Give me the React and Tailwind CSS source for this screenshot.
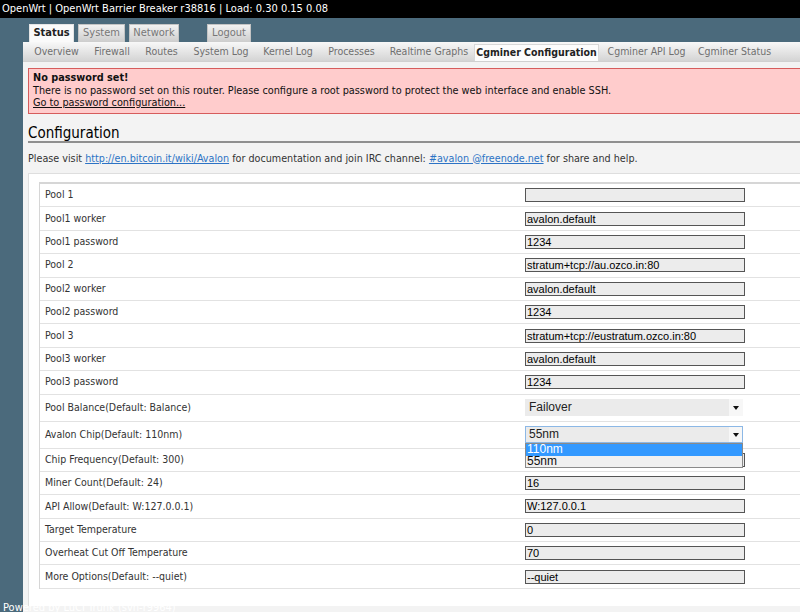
import React from "react";

const mainTabs = [
  { label: "Status", w: "w-[45px]", active: true },
  { label: "System", w: "w-[47px]" },
  { label: "Network", w: "w-[50px]" },
];

const subTabs = [
  { label: "Overview", w: "w-[59px]" },
  { label: "Firewall", w: "w-[52px]" },
  { label: "Routes", w: "w-[47px]" },
  { label: "System Log", w: "w-[72px]" },
  { label: "Kernel Log", w: "w-[62px]" },
  { label: "Processes", w: "w-[65px]" },
  { label: "Realtime Graphs", w: "w-[90px]" },
  { label: "Cgminer Configuration", w: "w-[125px]", active: true },
  { label: "Cgminer API Log", w: "w-[95px]" },
  { label: "Cgminer Status", w: "w-[81px]" },
];

const rowsA = [
  ["Pool 1", ""],
  ["Pool1 worker", "avalon.default"],
  ["Pool1 password", "1234"],
  ["Pool 2", "stratum+tcp://au.ozco.in:80"],
  ["Pool2 worker", "avalon.default"],
  ["Pool2 password", "1234"],
  ["Pool 3", "stratum+tcp://eustratum.ozco.in:80"],
  ["Pool3 worker", "avalon.default"],
  ["Pool3 password", "1234"],
];

const rowsB = [
  ["Chip Frequency(Default: 300)", ""],
  ["Miner Count(Default: 24)", "16"],
  ["API Allow(Default: W:127.0.0.1)", "W:127.0.0.1"],
  ["Target Temperature", "0"],
  ["Overheat Cut Off Temperature", "70"],
  ["More Options(Default: --quiet)", "--quiet"],
];

function Arrow() {
  return (
    <svg width="6" height="4" viewBox="0 0 6 4">
      <path d="M0 0 L6 0 L3 4 Z" fill="#111" />
    </svg>
  );
}

function TextBox({ value }) {
  return (
    <div className="w-[220px] h-[14px] border border-[#555] bg-[#ececec] font-['Liberation_Sans',Arial,sans-serif] text-[11px] leading-[12px] text-black pl-[1px] whitespace-nowrap overflow-hidden">
      {value}
    </div>
  );
}

function Row({ label, children, tall }) {
  return (
    <div
      className={
        "flex items-center border-b border-[#e2e2e2] " +
        (tall ? "h-[27px]" : "h-[23.4px]")
      }
    >
      <div className="w-[485px] pl-[5px] text-[#333]">{label}</div>
      {children}
    </div>
  );
}

export default function App() {
  return (
    <div className="relative w-[800px] h-[612px] overflow-hidden bg-[#4b6a7c] font-['DejaVu_Sans_Condensed','DejaVu_Sans',sans-serif] text-[10.5px] text-[#222]">
      <div className="h-[18px] bg-black text-white text-[11px] leading-[18px] pl-[2px] whitespace-nowrap">
        OpenWrt | OpenWrt Barrier Breaker r38816 | Load: 0.30 0.15 0.08
      </div>

      <div className="flex items-end h-[24px] pl-[29px] gap-[4px] text-[11px]">
        {mainTabs.map((t) => (
          <div
            key={t.label}
            className={
              t.w +
              " h-[18px] flex items-center justify-center border border-b-0 " +
              (t.active
                ? "bg-[#fafafa] border-[#e5e5e5] font-bold text-[#222]"
                : "bg-gradient-to-b from-[#f2f2f2] to-[#cdcdcd] border-[#c4c4c4] text-[#777]")
            }
          >
            {t.label}
          </div>
        ))}
        <div className="ml-[24px] w-[44px] h-[18px] flex items-center justify-center border border-b-0 bg-gradient-to-b from-[#f2f2f2] to-[#cdcdcd] border-[#c4c4c4] text-[#777]">
          Logout
        </div>
      </div>

      <div className="ml-[23px] w-[800px] h-[570px] bg-[#f3f3f3]">
        <div className="flex h-[20px] pl-[4px] bg-gradient-to-b from-[#f8f8f8] to-[#d4d4d4] border-b border-[#d0d0d0]">
          {subTabs.map((t) => (
            <div
              key={t.label}
              className={
                t.w +
                " flex items-center justify-center whitespace-nowrap " +
                (t.active
                  ? "mt-[2px] bg-[#fcfcfc] border border-b-0 border-[#d8d8d8] font-bold text-[#222]"
                  : "text-[#6f6f6f]")
              }
            >
              {t.label}
            </div>
          ))}
        </div>

        <div className="mt-[6px] ml-[5px] w-[790px] border border-[#d65c5c] bg-[#ffcccc] px-[4px] pt-[3px] pb-[3px] text-[10.8px] leading-[12.5px] text-[#111]">
          <div className="font-bold">No password set!</div>
          <div>
            There is no password set on this router. Please configure a root
            password to protect the web interface and enable SSH.
          </div>
          <div className="underline">Go to password configuration...</div>
        </div>

        <h2 className="mt-[11px] ml-[5px] w-[790px] text-[15px] leading-[16px] font-normal text-black border-b-2 border-[#8f8f8f]">
          Configuration
        </h2>

        <p className="mt-[9px] ml-[5px] text-[10.7px] leading-[13px] text-[#333] whitespace-nowrap">
          Please visit{" "}
          <span className="text-[#2d73c5] underline">
            http://en.bitcoin.it/wiki/Avalon
          </span>{" "}
          for documentation and join IRC channel:{" "}
          <span className="text-[#2d73c5] underline">#avalon @freenode.net</span>{" "}
          for share and help.
        </p>

        <div className="mt-[8.5px] ml-[5px] w-[790px] border-t border-l border-[#dedede] bg-white pt-[8px] pl-[10px] pb-[17px]">
          <div className="w-[780px] border-t-2 border-l border-[#d6d6d6]">
            {rowsA.map(([l, v]) => (
              <Row key={l} label={l}>
                <TextBox value={v} />
              </Row>
            ))}
            <Row label="Pool Balance(Default: Balance)" tall>
              <div className="w-[218px] h-[17px] flex bg-[#ebebeb] font-['Liberation_Sans',Arial,sans-serif] text-[12px] text-[#222]">
                <div className="flex-1 pl-[4px] leading-[17px]">Failover</div>
                <div className="w-[14px] bg-[#f7f7f7] flex items-center justify-center">
                  <Arrow />
                </div>
              </div>
            </Row>
            <Row label="Avalon Chip(Default: 110nm)" tall>
              <div className="relative w-[218px] h-[17px] flex border border-[#8cb8e6] bg-[#ebebeb] font-['Liberation_Sans',Arial,sans-serif] text-[12px] text-[#222]">
                <div className="flex-1 pl-[3px] leading-[15px]">55nm</div>
                <div className="w-[13px] bg-[#f7f7f7] flex items-center justify-center">
                  <Arrow />
                </div>
                <div className="absolute left-[-1px] top-[16px] z-10 w-[218px] border border-[#8a8a8a] bg-[#f0f0f0] text-[12px] leading-[11.5px]">
                  <div className="bg-[#3399ff] text-white pl-[1px]">110nm</div>
                  <div className="text-[#111] pl-[1px]">55nm</div>
                </div>
              </div>
            </Row>
            {rowsB.map(([l, v]) => (
              <Row key={l} label={l}>
                <TextBox value={v} />
              </Row>
            ))}
          </div>
        </div>
      </div>

      <div className="absolute left-[3px] bottom-[-4px] text-[11px] text-white whitespace-nowrap">
        Powered by LuCI Trunk (svn-r9964)
      </div>
    </div>
  );
}
